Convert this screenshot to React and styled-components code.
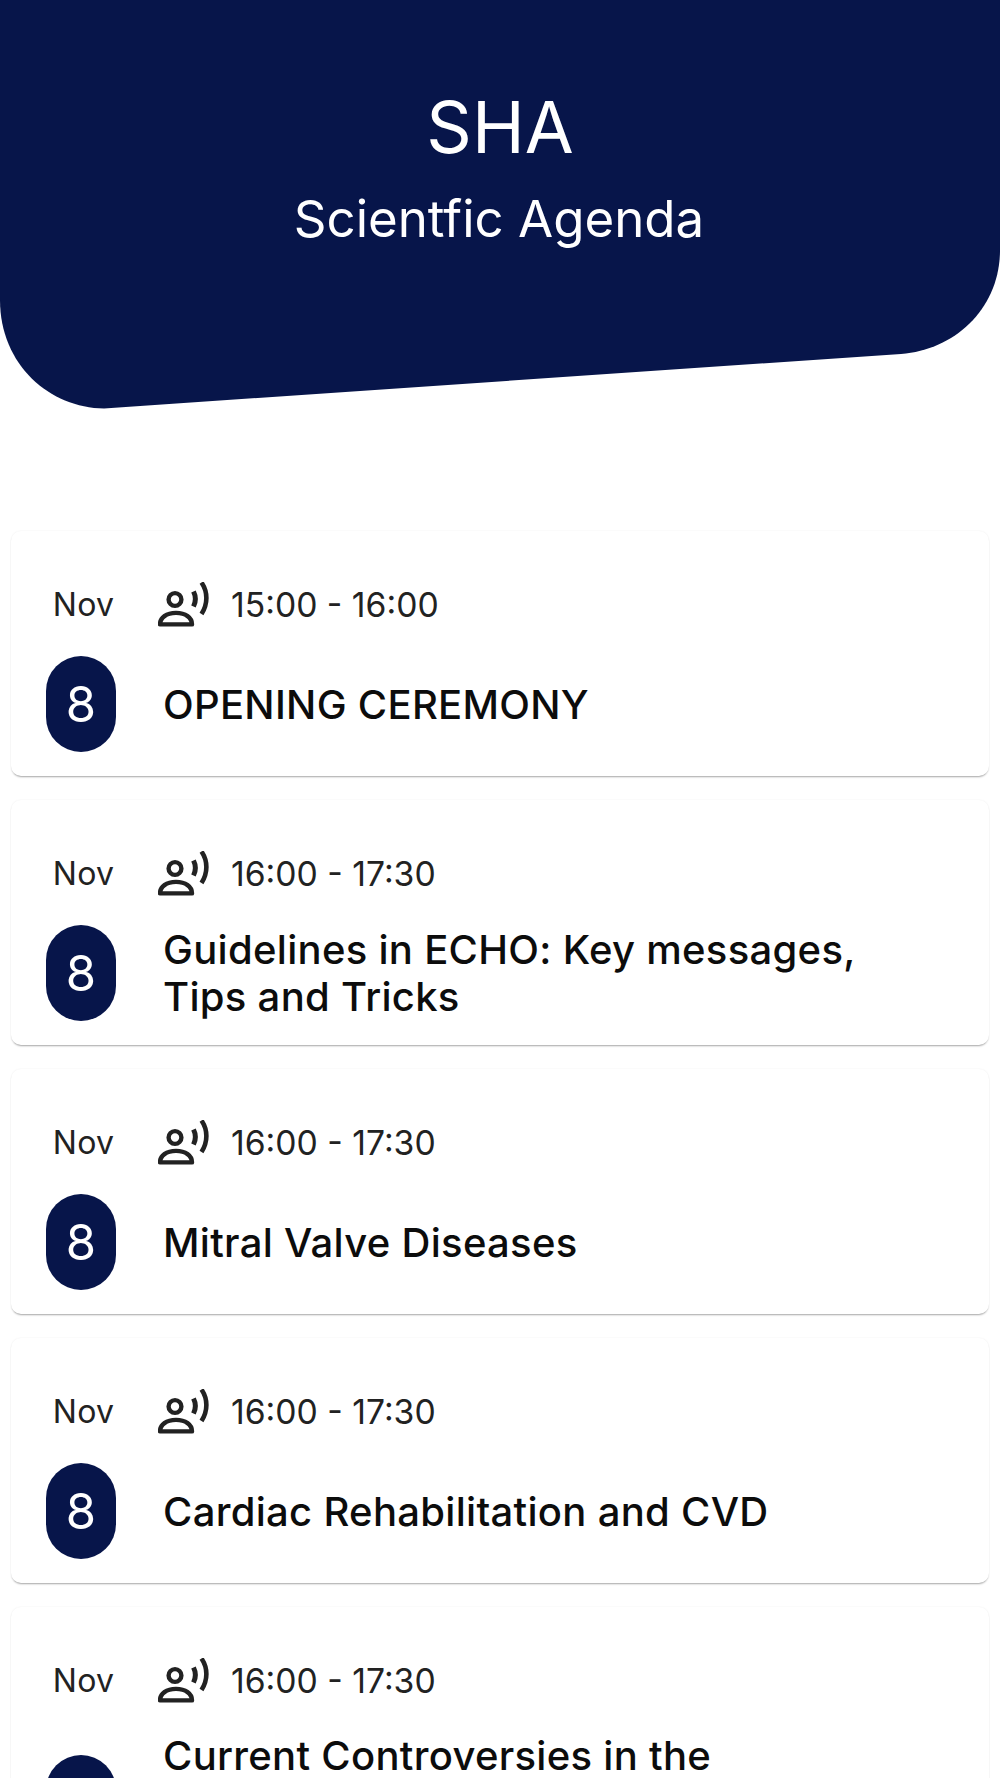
import React from "react";
import styled, { createGlobalStyle } from "styled-components";

const Global = createGlobalStyle`
  html, body { margin: 0; padding: 0; background: #fff; height: 1778px; overflow: hidden; }
  * { box-sizing: border-box; }
  body { font-family: Inter, "Noto Sans", "Liberation Sans", sans-serif; }
`;

const Page = styled.div`
  width: 1000px;
  display: flex;
  flex-direction: column;
`;

const Hero = styled.header`
  height: 409px;
  background: #07154a;
  color: #fff;
  clip-path: path("M0 0 H1000 V250 C1000 308 955 350 901 354 L104 408.5 C50 408 0 365 0 300 Z");
  display: flex;
  flex-direction: column;
  align-items: center;
  padding-top: 88px;
`;

const HeroTitle = styled.h1`
  margin: 0;
  font-size: 71px;
  font-weight: 400;
  line-height: 78px;
`;

const HeroSubtitle = styled.h2`
  margin: 23px 0 0;
  font-size: 51px;
  font-weight: 400;
  line-height: 60px;
  padding-right: 2px;
`;

const List = styled.main`
  margin-top: 122px;
  padding: 0 11px;
  display: flex;
  flex-direction: column;
  gap: 24px;
`;

const Card = styled.article`
  background: #fff;
  border-radius: 10px;
  padding: 51px 35px 24px;
  box-shadow: 0 2px 2px -1px rgba(0, 0, 0, 0.34), 0 0 2px rgba(0, 0, 0, 0.07);
  display: grid;
  grid-template-columns: 70px 1fr;
  column-gap: 48px;
  row-gap: 28px;
  align-items: center;
`;

const Month = styled.div`
  font-size: 32px;
  letter-spacing: 0.2px;
  line-height: 46px;
  color: #222;
  justify-self: center;
  padding-left: 5px;
`;

const TimeRow = styled.div`
  display: flex;
  align-items: center;
  gap: 20px;
  margin-left: -6px;
  font-size: 33.7px;
  line-height: 46px;
  color: #222;
`;

const Badge = styled.div`
  width: 70px;
  height: 96px;
  border-radius: 35px;
  background: #07154a;
  color: #fff;
  display: flex;
  align-items: center;
  justify-content: center;
  font-size: 49px;
  font-weight: 400;
`;

const Title = styled.h3`
  margin: 0;
  align-self: center;
  min-height: ${(p) => (p.$lines || 1) * 47}px;
  font-size: 40px;
  letter-spacing: 0.3px;
  font-weight: 500;
  line-height: 47px;
  color: #0c0c0c;
  margin-left: -1px;
  max-width: 760px;
`;

const SpeakerIcon = () => (
  <svg width="53" height="46" viewBox="0 0 53 46" fill="none" stroke="#222" strokeWidth="4.4" aria-hidden="true">
    <circle cx="17" cy="17.5" r="6.4" />
    <path d="M2 42.4 C2 35.6 8.5 30.9 18 30.9 C27.5 30.9 34 35.6 34 42.4 Z" strokeLinejoin="round" />
    <path d="M35.5 9.5 C38 14.5 38 19.5 35.5 24.5" strokeWidth="5" />
    <path d="M43.5 0.5 C50 10 50 22 43.5 32" strokeWidth="4.6" />
  </svg>
);

const sessions = [
  { time: "15:00 - 16:00", title: "OPENING CEREMONY" },
  { time: "16:00 - 17:30", title: "Guidelines in ECHO: Key messages, Tips and Tricks" },
  { time: "16:00 - 17:30", title: "Mitral Valve Diseases" },
  { time: "16:00 - 17:30", title: "Cardiac Rehabilitation and CVD" },
  { time: "16:00 - 17:30", title: "Current Controversies in the", lines: 3 },
];

export default function App() {
  return (
    <Page>
      <Global />
      <Hero>
        <HeroTitle>SHA</HeroTitle>
        <HeroSubtitle>Scientfic Agenda</HeroSubtitle>
      </Hero>
      <List>
        {sessions.map((s) => (
          <Card key={s.title}>
            <Month>Nov</Month>
            <TimeRow>
              <SpeakerIcon />
              <span>{s.time}</span>
            </TimeRow>
            <Badge>8</Badge>
            <Title $lines={s.lines || (s.title.length > 40 ? 2 : 1)}>{s.title}</Title>
          </Card>
        ))}
      </List>
    </Page>
  );
}
